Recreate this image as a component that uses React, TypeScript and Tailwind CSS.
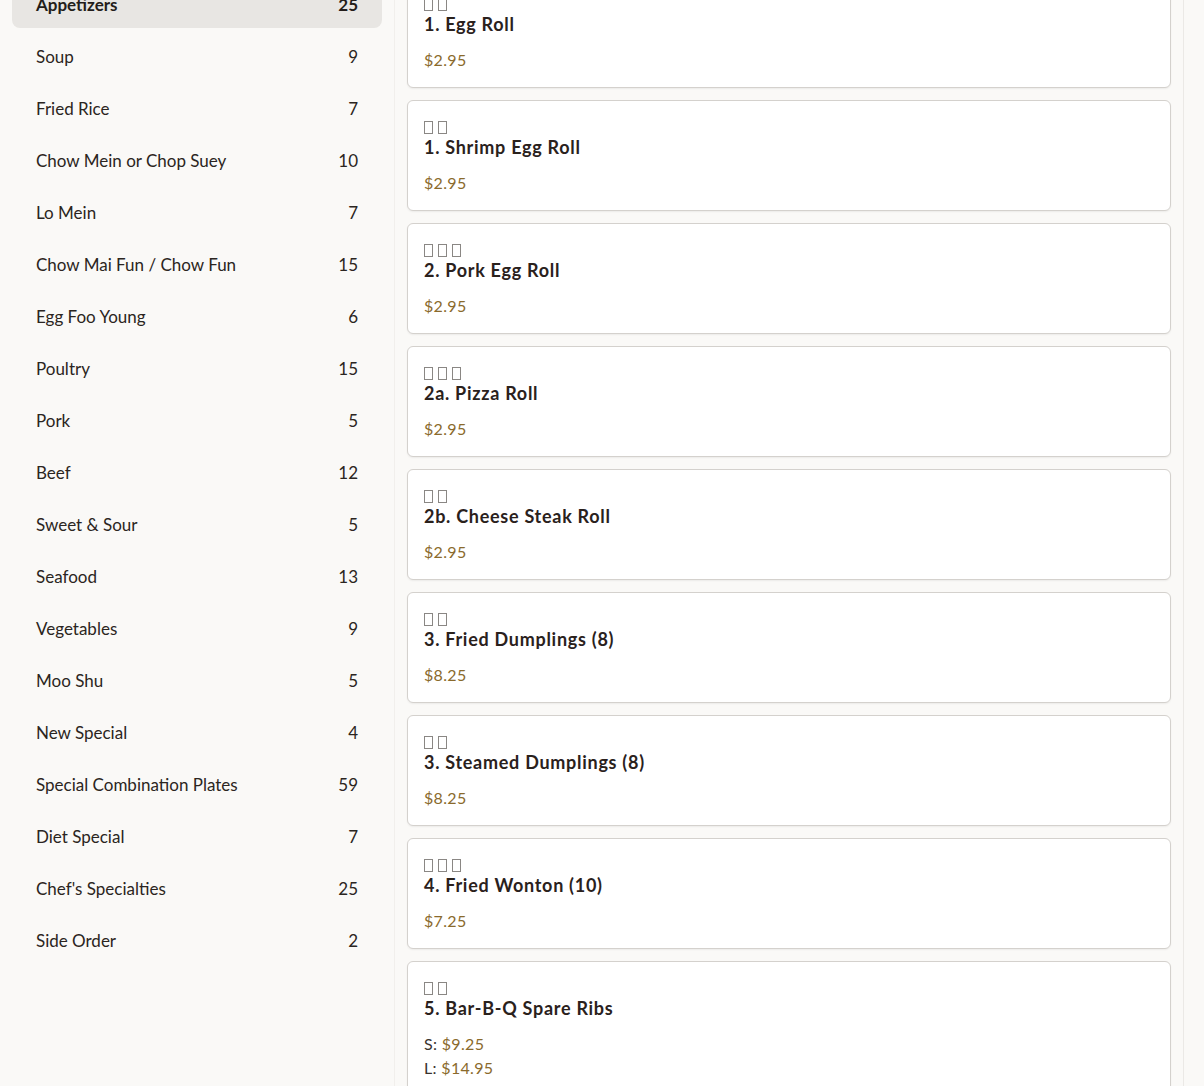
import React from "react";

const categories: [string, number][] = [
  ["Appetizers", 25],
  ["Soup", 9],
  ["Fried Rice", 7],
  ["Chow Mein or Chop Suey", 10],
  ["Lo Mein", 7],
  ["Chow Mai Fun / Chow Fun", 15],
  ["Egg Foo Young", 6],
  ["Poultry", 15],
  ["Pork", 5],
  ["Beef", 12],
  ["Sweet & Sour", 5],
  ["Seafood", 13],
  ["Vegetables", 9],
  ["Moo Shu", 5],
  ["New Special", 4],
  ["Special Combination Plates", 59],
  ["Diet Special", 7],
  ["Chef's Specialties", 25],
  ["Side Order", 2],
];

type Item = { cn: number; name: string; prices: [string | null, string][] };

const items: Item[] = [
  { cn: 2, name: "1. Egg Roll", prices: [[null, "$2.95"]] },
  { cn: 2, name: "1. Shrimp Egg Roll", prices: [[null, "$2.95"]] },
  { cn: 3, name: "2. Pork Egg Roll", prices: [[null, "$2.95"]] },
  { cn: 3, name: "2a. Pizza Roll", prices: [[null, "$2.95"]] },
  { cn: 2, name: "2b. Cheese Steak Roll", prices: [[null, "$2.95"]] },
  { cn: 2, name: "3. Fried Dumplings (8)", prices: [[null, "$8.25"]] },
  { cn: 2, name: "3. Steamed Dumplings (8)", prices: [[null, "$8.25"]] },
  { cn: 3, name: "4. Fried Wonton (10)", prices: [[null, "$7.25"]] },
  {
    cn: 2,
    name: "5. Bar-B-Q Spare Ribs",
    prices: [
      ["S:", "$9.25"],
      ["L:", "$14.95"],
    ],
  },
];

export default function App() {
  return (
    <div
      className="flex h-[1086px] overflow-hidden bg-[#faf9f7] text-[#2b2521]"
      style={{ fontFamily: "Lato, 'Noto Sans', sans-serif" }}
    >
      <aside className="w-[395px] shrink-0 border-r border-[#f1efec] px-3">
        <ul className="-mt-[24px]">
          {categories.map(([name, count], i) => (
            <li
              key={name}
              className={
                i === 0
                  ? "flex h-[52px] items-center justify-between rounded-lg bg-[#e8e6e3] px-6 pt-[6px] text-[17px] font-bold text-[#231d1a]"
                  : "flex h-[52px] items-center justify-between px-6 pt-[6px] text-[17px] text-[#2b2521]"
              }
            >
              <span>{name}</span>
              <span>{count}</span>
            </li>
          ))}
        </ul>
      </aside>
      <main className="w-[789px] shrink-0 border-r border-[#ebe9e6] px-3">
        <div className="-mt-[23px] flex flex-col gap-3">
          {items.map((it) => (
            <div
              key={it.name}
              className="rounded-md border border-[#d4d1cd] bg-white px-4 pb-[18px] pt-4 shadow-[0_1px_2px_rgba(0,0,0,0.06)]"
            >
              <div className="flex h-5 items-center gap-[5px] pt-[1px]">
                {Array.from({ length: it.cn }).map((_, k) => (
                  <span key={k} className="inline-block h-[13px] w-[9px] border border-[#8a8784]" />
                ))}
              </div>
              <div className="h-6 text-[18px] font-bold leading-5 tracking-[0.04em] text-[#2a211c]">{it.name}</div>
              <div className="mt-3 flex flex-col gap-[5px]">
                {it.prices.map(([label, price], j) => (
                  <div key={j} className="text-[16px] leading-[19px] tracking-[0.02em]">
                    {label && <span className="text-[#3a332e]">{label} </span>}
                    <span className="text-[#8a6a2c]">{price}</span>
                  </div>
                ))}
              </div>
            </div>
          ))}
        </div>
      </main>
    </div>
  );
}
